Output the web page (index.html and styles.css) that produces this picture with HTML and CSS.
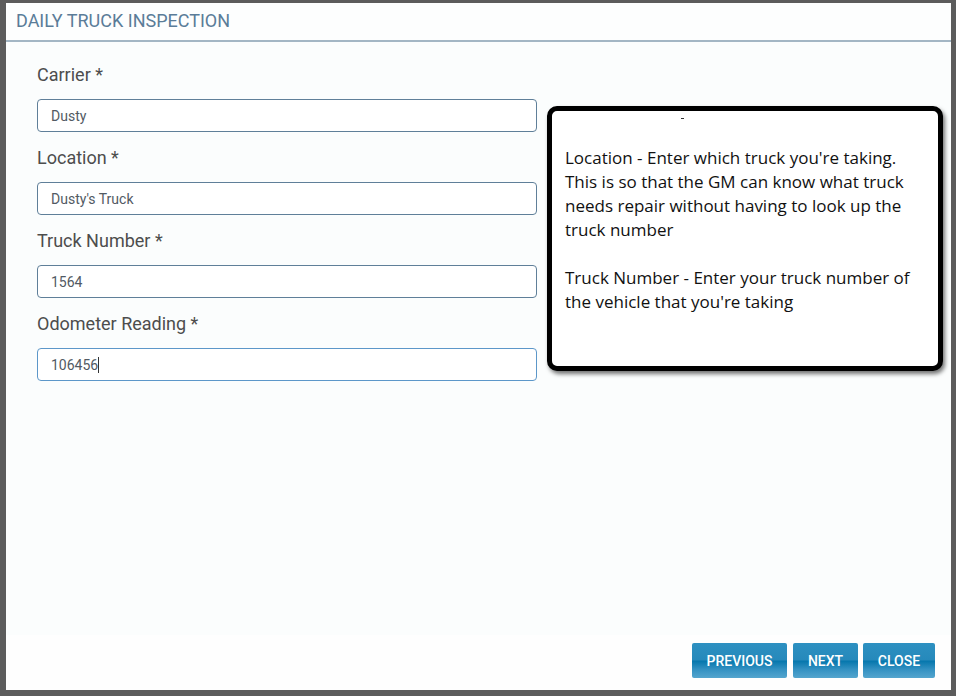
FILE: index.html
```html
<!DOCTYPE html>
<html>
<head>
<meta charset="utf-8">
<link rel="stylesheet" href="styles.css">
</head>
<body>
<div class="modal">
  <div class="modal-header">DAILY TRUCK INSPECTION</div>
  <div class="modal-body">
    <div class="form">
      <div class="field">
        <div class="label">Carrier *</div>
        <div class="input">Dusty</div>
      </div>
      <div class="field">
        <div class="label">Location *</div>
        <div class="input">Dusty's Truck</div>
      </div>
      <div class="field">
        <div class="label">Truck Number *</div>
        <div class="input">1564</div>
      </div>
      <div class="field">
        <div class="label">Odometer Reading *</div>
        <div class="input focused"><span class="caret">106456</span></div>
      </div>
    </div>
    <div class="tooltip">
      <span class="dash"></span>
      <p>Location - Enter which truck you're taking. This is so that the GM can know what truck needs repair without having to look up the truck number</p>
      <p>Truck Number - Enter your truck number of the vehicle that you're taking</p>
    </div>
  </div>
  <div class="modal-footer">
    <button class="btn btn-prev">PREVIOUS</button>
    <button class="btn btn-next">NEXT</button>
    <button class="btn btn-close">CLOSE</button>
  </div>
</div>
</body>
</html>
```
FILE: styles.css
```css
html, body {
  margin: 0;
  padding: 0;
}
body {
  background: #5c5c5c;
  width: 956px;
  height: 696px;
  padding: 3px 5px 6px 6px;
  box-sizing: border-box;
  font-family: Roboto, "Liberation Sans", sans-serif;
}
.modal {
  width: 945px;
  height: 687px;
  background: #fbfdfd;
  display: flex;
  flex-direction: column;
  position: relative;
}
.modal-header {
  height: 37px;
  border-bottom: 2px solid #a3b6c4;
  background: #fdfefe;
  color: #5a7c98;
  font-size: 18px;
  line-height: 36px;
  padding-left: 10px;
  box-sizing: content-box;
}
.modal-body {
  flex: 1;
  padding: 21px 31px 0 31px;
}
.form {
  width: 500px;
}
.field {
  margin-bottom: 14px;
}
.label {
  font-size: 18px;
  line-height: 24px;
  color: #4d4d4d;
  margin-bottom: 12px;
}
.input {
  height: 33px;
  box-sizing: border-box;
  border: 1px solid #5f7f99;
  border-radius: 4px;
  background: #fff;
  font-size: 14px;
  line-height: 32px;
  color: #525a63;
  padding-left: 13px;
}
.input.focused {
  border-color: #5c97c9;
}
.caret {
  border-right: 1px solid #333;
}
.tooltip {
  position: absolute;
  left: 541px;
  top: 103px;
  width: 396px;
  height: 265px;
  box-sizing: border-box;
  border: 5px solid #000;
  border-radius: 10px;
  background: #fff;
  box-shadow: 2px 3px 4px rgba(0, 0, 0, 0.55);
  padding: 35px 14px 0 13px;
  font-family: "Open Sans", "Noto Sans", sans-serif;
  font-size: 17px;
  line-height: 24px;
  color: #111;
}
.tooltip p {
  margin: 0 0 24px 0;
}
.dash {
  position: absolute;
  left: 129px;
  top: 7px;
  width: 3px;
  height: 1px;
  background: #333;
}
.modal-footer {
  height: 55px;
  background: #fefefe;
  display: flex;
  justify-content: flex-end;
  align-items: flex-start;
  padding: 8px 16px 0 0;
  box-sizing: border-box;
  gap: 5px;
}
.btn {
  height: 35px;
  border: none;
  border-radius: 2px;
  color: #fff;
  font-family: Roboto, "Liberation Sans", sans-serif;
  font-size: 14px;
  font-weight: 500;
  padding: 0;
  background: linear-gradient(to bottom, #2d90c1 0%, #2689bb 48%, #0677ad 52%, #3391c2 75%, #54a5ce 100%);
}
.btn-prev { width: 95px; margin-right: 1px; }
.btn-next { width: 65px; }
.btn-close { width: 72px; }
```
